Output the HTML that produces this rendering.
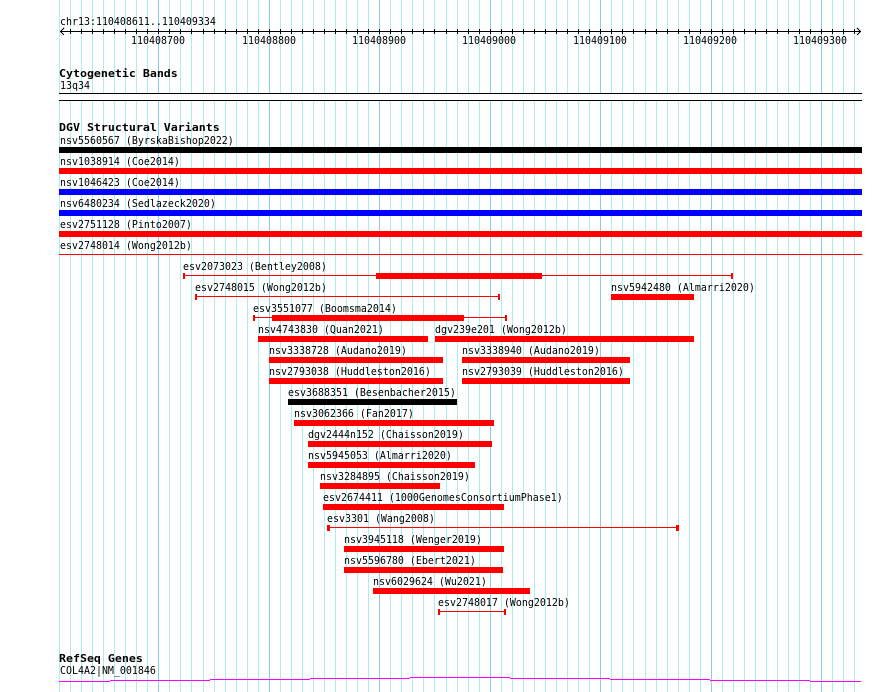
<!DOCTYPE html>
<html><head><meta charset="utf-8"><style>
html,body{margin:0;padding:0;background:#fff;width:890px;height:692px;overflow:hidden}
svg{display:block}
text{font-family:"DejaVu Sans Mono","Liberation Mono",monospace;font-size:11px;fill:#000;white-space:pre;transform-box:fill-box;transform-origin:0 100%;transform:scaleX(.906)}
.b{font-weight:bold;font-size:11px;transform:scaleX(1.057)}
</style></head><body>
<svg width="890" height="692" viewBox="0 0 890 692" shape-rendering="crispEdges">
<path stroke="#aaeeee" stroke-width="1" d="M59.5 0V692M70.5 0V692M81.5 0V692M92.5 0V692M103.5 0V692M114.5 0V692M125.5 0V692M136.5 0V692M147.5 0V692M169.5 0V692M180.5 0V692M191.5 0V692M203.5 0V692M214.5 0V692M225.5 0V692M236.5 0V692M247.5 0V692M258.5 0V692M280.5 0V692M291.5 0V692M302.5 0V692M313.5 0V692M324.5 0V692M335.5 0V692M346.5 0V692M357.5 0V692M368.5 0V692M390.5 0V692M401.5 0V692M412.5 0V692M423.5 0V692M434.5 0V692M446.5 0V692M457.5 0V692M468.5 0V692M479.5 0V692M501.5 0V692M512.5 0V692M523.5 0V692M534.5 0V692M545.5 0V692M556.5 0V692M567.5 0V692M578.5 0V692M589.5 0V692M611.5 0V692M622.5 0V692M633.5 0V692M645.5 0V692M656.5 0V692M667.5 0V692M678.5 0V692M689.5 0V692M700.5 0V692M722.5 0V692M733.5 0V692M744.5 0V692M755.5 0V692M766.5 0V692M777.5 0V692M788.5 0V692M799.5 0V692M810.5 0V692M832.5 0V692M843.5 0V692M854.5 0V692"/>
<path stroke="#88ccee" stroke-width="1" d="M158.5 0V692M269.5 0V692M379.5 0V692M490.5 0V692M600.5 0V692M711.5 0V692M821.5 0V692"/>
<rect x="59" y="94" width="803" height="6" fill="#fff"/>

<text x="60" y="25">chr13:110408611..110409334</text>
<path fill="none" stroke="#000" d="M60 31.500H861M64 28L60.500 31.500L64 35M857 28L860.500 31.500L857 35"/>
<path stroke="#000" d="M70.500 29V34M81.500 29V34M92.500 29V34M103.500 29V34M114.500 29V34M125.500 29V34M136.500 29V34M147.500 29V34M158.500 29V34M169.500 29V34M180.500 29V34M191.500 29V34M203.500 29V34M214.500 29V34M225.500 29V34M236.500 29V34M247.500 29V34M258.500 29V34M269.500 29V34M280.500 29V34M291.500 29V34M302.500 29V34M313.500 29V34M324.500 29V34M335.500 29V34M346.500 29V34M357.500 29V34M368.500 29V34M379.500 29V34M390.500 29V34M401.500 29V34M412.500 29V34M423.500 29V34M434.500 29V34M446.500 29V34M457.500 29V34M468.500 29V34M479.500 29V34M490.500 29V34M501.500 29V34M512.500 29V34M523.500 29V34M534.500 29V34M545.500 29V34M556.500 29V34M567.500 29V34M578.500 29V34M589.500 29V34M600.500 29V34M611.500 29V34M622.500 29V34M633.500 29V34M645.500 29V34M656.500 29V34M667.500 29V34M678.500 29V34M689.500 29V34M700.500 29V34M711.500 29V34M722.500 29V34M733.500 29V34M744.500 29V34M755.500 29V34M766.500 29V34M777.500 29V34M788.500 29V34M799.500 29V34M810.500 29V34M821.500 29V34M832.500 29V34M843.500 29V34M854.500 29V34"/>
<text x="131" y="44">110408700</text>
<text x="242" y="44">110408800</text>
<text x="352" y="44">110408900</text>
<text x="462" y="44">110409000</text>
<text x="573" y="44">110409100</text>
<text x="683" y="44">110409200</text>
<text x="793" y="44">110409300</text>

<text class="b" x="59" y="77">Cytogenetic Bands</text>
<text x="60" y="89">13q34</text>
<rect x="59" y="93" width="803" height="1" fill="#000"/>
<rect x="59" y="100" width="803" height="1" fill="#000"/>

<text class="b" x="59" y="131">DGV Structural Variants</text>
<text x="60" y="144">nsv5560567 (ByrskaBishop2022)</text>
<rect x="59" y="147" width="803" height="6" fill="#000"/>
<text x="60" y="165">nsv1038914 (Coe2014)</text>
<rect x="59" y="168" width="803" height="6" fill="#f00"/>
<text x="60" y="186">nsv1046423 (Coe2014)</text>
<rect x="59" y="189" width="803" height="6" fill="#00f"/>
<text x="60" y="207">nsv6480234 (Sedlazeck2020)</text>
<rect x="59" y="210" width="803" height="6" fill="#00f"/>
<text x="60" y="228">esv2751128 (Pinto2007)</text>
<rect x="59" y="231" width="803" height="6" fill="#f00"/>
<text x="60" y="249">esv2748014 (Wong2012b)</text>
<rect x="59" y="254" width="803" height="1" fill="#f00"/>

<g fill="#f00">
<rect x="183" y="273" width="2" height="6"/><rect x="183" y="275" width="549" height="1"/><rect x="376" y="273" width="166" height="6"/><rect x="731" y="273" width="2" height="6"/>
<rect x="195" y="294" width="2" height="6"/><rect x="195" y="296" width="305" height="1"/><rect x="498" y="294" width="2" height="6"/>
<rect x="611" y="294" width="83" height="6"/>
<rect x="253" y="315" width="2" height="6"/><rect x="253" y="317" width="254" height="1"/><rect x="272" y="315" width="192" height="6"/><rect x="505" y="315" width="2" height="6"/>
<rect x="258" y="336" width="170" height="6"/>
<rect x="435" y="336" width="259" height="6"/>
<rect x="269" y="357" width="174" height="6"/>
<rect x="462" y="357" width="168" height="6"/>
<rect x="269" y="378" width="174" height="6"/>
<rect x="462" y="378" width="168" height="6"/>
<rect x="294" y="420" width="200" height="6"/>
<rect x="308" y="441" width="184" height="6"/>
<rect x="308" y="462" width="167" height="6"/>
<rect x="320" y="483" width="120" height="6"/>
<rect x="323" y="504" width="181" height="6"/>
<rect x="327" y="525" width="3" height="6"/><rect x="327" y="527" width="352" height="1"/><rect x="676" y="525" width="3" height="6"/>
<rect x="344" y="546" width="160" height="6"/>
<rect x="344" y="567" width="159" height="6"/>
<rect x="373" y="588" width="157" height="6"/>
<rect x="438" y="609" width="2" height="6"/><rect x="438" y="611" width="68" height="1"/><rect x="504" y="609" width="2" height="6"/>
</g>
<rect x="288" y="399" width="169" height="6" fill="#000"/>

<text x="183" y="270">esv2073023 (Bentley2008)</text>
<text x="195" y="291">esv2748015 (Wong2012b)</text>
<text x="611" y="291">nsv5942480 (Almarri2020)</text>
<text x="253" y="312">esv3551077 (Boomsma2014)</text>
<text x="258" y="333">nsv4743830 (Quan2021)</text>
<text x="435" y="333">dgv239e201 (Wong2012b)</text>
<text x="269" y="354">nsv3338728 (Audano2019)</text>
<text x="462" y="354">nsv3338940 (Audano2019)</text>
<text x="269" y="375">nsv2793038 (Huddleston2016)</text>
<text x="462" y="375">nsv2793039 (Huddleston2016)</text>
<text x="288" y="396">esv3688351 (Besenbacher2015)</text>
<text x="294" y="417">nsv3062366 (Fan2017)</text>
<text x="308" y="438">dgv2444n152 (Chaisson2019)</text>
<text x="308" y="459">nsv5945053 (Almarri2020)</text>
<text x="320" y="480">nsv3284895 (Chaisson2019)</text>
<text x="323" y="501">esv2674411 (1000GenomesConsortiumPhase1)</text>
<text x="327" y="522">esv3301 (Wang2008)</text>
<text x="344" y="543">nsv3945118 (Wenger2019)</text>
<text x="344" y="564">nsv5596780 (Ebert2021)</text>
<text x="373" y="585">nsv6029624 (Wu2021)</text>
<text x="438" y="606">esv2748017 (Wong2012b)</text>

<text class="b" x="59" y="662">RefSeq Genes</text>
<text x="60" y="674">COL4A2|NM_001846</text>
<g fill="#f0f">
<rect x="59" y="681" width="51" height="1"/>
<rect x="110" y="680" width="100" height="1"/>
<rect x="210" y="679" width="100" height="1"/>
<rect x="310" y="678" width="100" height="1"/>
<rect x="410" y="677" width="100" height="1"/>
<rect x="510" y="678" width="100" height="1"/>
<rect x="610" y="679" width="100" height="1"/>
<rect x="710" y="680" width="100" height="1"/>
<rect x="810" y="681" width="51" height="1"/>
</g>
</svg>
</body></html>
